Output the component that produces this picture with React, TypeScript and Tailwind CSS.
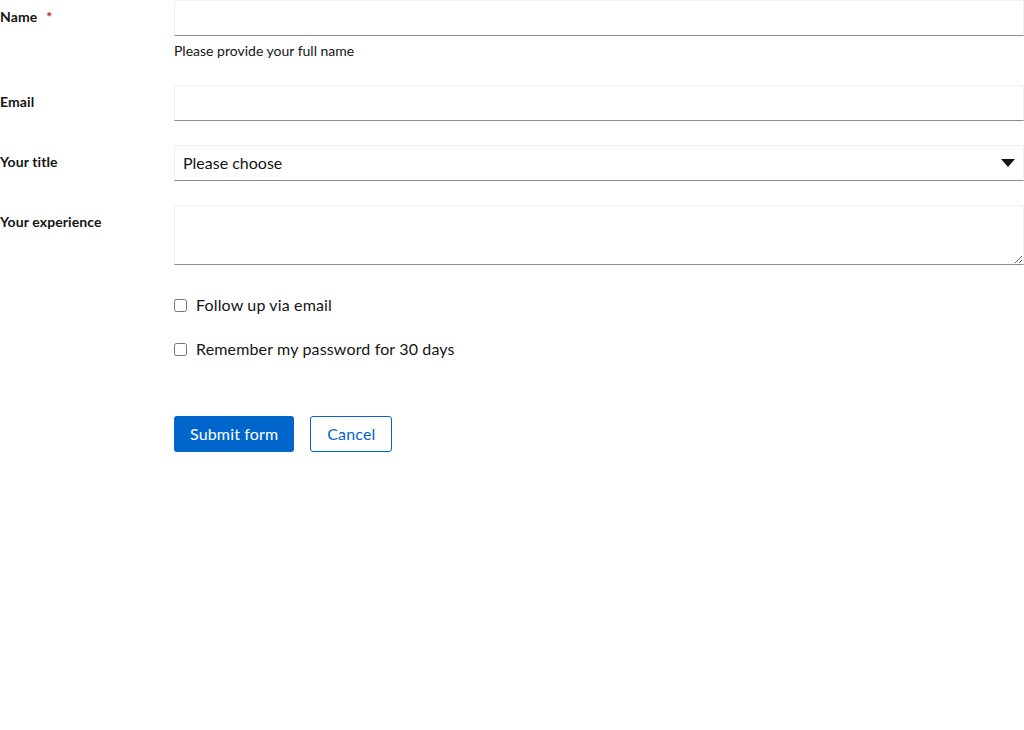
import * as React from "react";

const font = { fontFamily: "Lato, 'Open Sans', sans-serif" };

function Label({ text, required }: { text: string; required?: boolean }) {
  return (
    <div className="pt-[6px] text-[14px] leading-[21px] font-bold text-[#151515] tracking-[0.1px]">
      {text}
      {required && <span className="ml-[9px] text-[#c9190b]">*</span>}
    </div>
  );
}

const inputCls =
  "block w-full h-9 border border-[#f0f0f0] border-b-[#8a8d90] bg-white px-2 text-[16px] text-[#151515] outline-none";

export default function App() {
  return (
    <div className="bg-white min-h-[730px] text-[#151515]" style={font}>
      <form className="grid grid-cols-[150px_1fr] gap-x-6 gap-y-6">
        <Label text="Name" required />
        <div>
          <input className={inputCls} type="text" />
          <div className="mt-1 text-[14px] leading-[21px]">Please provide your full name</div>
        </div>

        <Label text="Email" />
        <input className={inputCls} type="email" />

        <Label text="Your title" />
        <div className="relative">
          <select className={inputCls + " appearance-none pr-8"}>
            <option>Please choose</option>
          </select>
          <svg
            className="absolute right-[9px] top-[14px] pointer-events-none"
            width="14"
            height="8"
            viewBox="0 0 14 8"
          >
            <path d="M0 0h14L7 8z" fill="#151515" />
          </svg>
        </div>

        <Label text="Your experience" />
        <textarea className="block w-full h-[60px] border border-[#f0f0f0] border-b-[#8a8d90] px-2 py-1 text-[16px] outline-none resize-y" />

        <div />
        <div className="flex flex-col gap-5 mt-1 tracking-[0.15px]">
          <label className="flex items-center text-[16px] leading-6">
            <input type="checkbox" className="w-[13px] h-[13px] m-0" />
            <span className="ml-[9px]">Follow up via email</span>
          </label>
          <label className="flex items-center text-[16px] leading-6">
            <input type="checkbox" className="w-[13px] h-[13px] m-0" />
            <span className="ml-[9px]">Remember my password for 30 days</span>
          </label>
        </div>

        <div />
        <div className="flex gap-4 mt-[31px] tracking-[0.15px]">
          <button
            type="button"
            className="h-9 px-4 rounded-[3px] bg-[#0066cc] text-white text-[16px]"
          >
            Submit form
          </button>
          <button
            type="button"
            className="h-9 px-4 rounded-[3px] border border-[#0066cc] text-[#0066cc] text-[16px] bg-white"
          >
            Cancel
          </button>
        </div>
      </form>
    </div>
  );
}
